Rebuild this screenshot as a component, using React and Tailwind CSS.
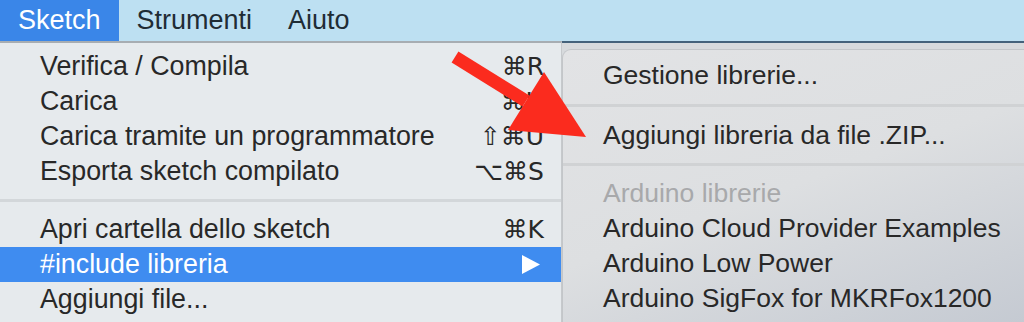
import React from "react";

const FONT = { fontFamily: '"Liberation Sans", "DejaVu Sans", Arial, sans-serif' };
const SYM = { fontFamily: '"DejaVu Sans", "Liberation Sans", sans-serif' };

function Row({ label, shortcut, active, arrow }) {
  return (
    <div
      className={
        "flex h-[35px] items-center justify-between pl-[40px] pr-[17px] " +
        (active ? "bg-[#3f8cf0] text-white" : "text-[#282828]")
      }
    >
      <span className="text-[26.8px] leading-[35px] whitespace-nowrap">{label}</span>
      {shortcut && (
        <span className="text-[25px] leading-[35px] whitespace-nowrap" style={SYM}>
          {shortcut}
        </span>
      )}
      {arrow && (
        <svg width="18" height="19" viewBox="0 0 18 19" className="mr-[4px]">
          <polygon points="0,0 18,9.5 0,19" fill="#ffffff" />
        </svg>
      )}
    </div>
  );
}

function SubRow({ label, disabled }) {
  return (
    <div
      className={
        "flex h-[35px] items-center pl-[40px] text-[26.5px] leading-[35px] whitespace-nowrap " +
        (disabled ? "text-[#a8a9ab]" : "text-[#282828]")
      }
    >
      {label}
    </div>
  );
}

export default function App() {
  return (
    <div className="relative h-[322px] w-[1024px] overflow-hidden bg-[#e6eaed]" style={FONT}>
      {/* Menu bar */}
      <div className="flex h-[41px] items-stretch bg-[#bde0f2] text-[27px] text-[#1f2c35]">
        <div className="flex items-center bg-[#3a86e8] px-[18px] text-white">Sketch</div>
        <div className="flex items-center px-[18px]">Strumenti</div>
        <div className="flex items-center px-[18px]">Aiuto</div>
      </div>

      <div className="flex h-[281px]">
        {/* Left menu */}
        <div className="w-[562px] border-t-[2px] border-r border-t-[#a7adb2] border-r-[#c6c9cc] bg-[#e6eaed] pt-[6px]">
          <Row label="Verifica / Compila" shortcut="⌘R" />
          <Row label="Carica" shortcut="⌘U" />
          <Row label="Carica tramite un programmatore" shortcut="⇧⌘U" />
          <Row label="Esporta sketch compilato" shortcut="⌥⌘S" />
          <div className="flex h-[23px] items-center">
            <div className="h-[3px] w-full bg-[#d3d7da]" />
          </div>
          <Row label="Apri cartella dello sketch" shortcut="⌘K" />
          <Row label="#include libreria" active arrow />
          <Row label="Aggiungi file..." />
        </div>

        {/* Right area with submenu */}
        <div className="flex flex-1 flex-col border-t-[2px] border-t-[#44627b] bg-[#d7dadd]">
          <div className="h-[6px]" />
          <div className="flex-1 rounded-tl-[9px] border-l border-t border-[#c3c6c9] bg-[linear-gradient(160deg,#e2e3e5_0%,#dddfe1_50%,#c5cad2_100%)] pt-[8px]">
            <SubRow label="Gestione librerie..." />
            <div className="flex h-[25px] items-center">
              <div className="h-[3px] w-full bg-[#d0d2d4]" />
            </div>
            <SubRow label="Aggiungi libreria da file .ZIP..." />
            <div className="flex h-[23px] items-center">
              <div className="h-[3px] w-full bg-[#d0d2d4]" />
            </div>
            <SubRow label="Arduino librerie" disabled />
            <SubRow label="Arduino Cloud Provider Examples" />
            <SubRow label="Arduino Low Power" />
            <SubRow label="Arduino SigFox for MKRFox1200" />
          </div>
        </div>
      </div>

      {/* Red annotation arrow */}
      <svg className="pointer-events-none absolute left-0 top-0" width="1024" height="322">
        <polygon
          points="451.6,62.5 458.4,51.5 529.4,95.5 522.6,106.5"
          fill="#fb2b1e"
        />
        <polygon points="544,72 586,137 508,130" fill="#fb2b1e" />
      </svg>
    </div>
  );
}
